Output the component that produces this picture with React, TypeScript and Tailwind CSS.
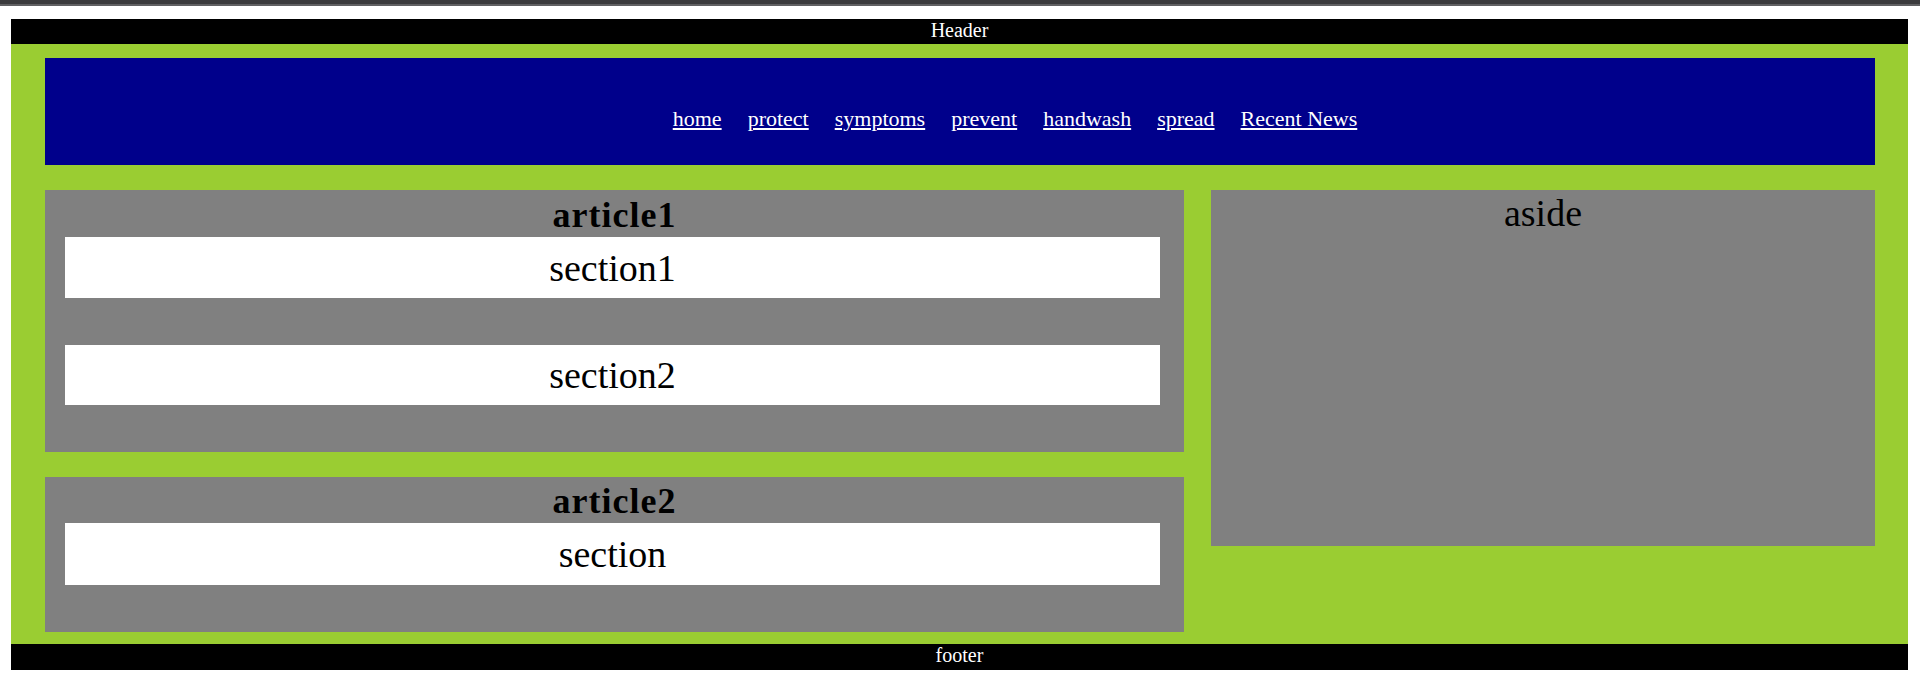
const links = ["home", "protect", "symptoms", "prevent", "handwash", "spread", "Recent News"];

const serif = "font-['Liberation_Serif','Times_New_Roman',serif]";

function Section({ label, className }: { label: string; className: string }) {
  return (
    <section
      className={`ml-[20px] mr-[24px] flex items-center justify-center bg-white text-[38px] leading-[44px] text-black ${serif} ${className}`}
    >
      {label}
    </section>
  );
}

function ArticleTitle({ children, className }: { children: React.ReactNode; className: string }) {
  return (
    <h2
      className={`text-center text-[36px] font-bold leading-[41px] tracking-[1px] text-black ${serif} ${className}`}
    >
      {children}
    </h2>
  );
}

export default function App() {
  return (
    <div className={`min-h-[688px] bg-white ${serif}`}>
      {/* window chrome strip */}
      <div className="h-[4px] bg-[#3b3b3d]" />
      <div className="h-[2px] bg-[#606062]" />

      <div className="ml-[11px] mr-[12px] mt-[13px]">
        <header className="h-[25px] bg-black text-center text-[20px] leading-[22px] text-white">
          Header
        </header>

        <div className="bg-[#9acd32] pb-[12px] pl-[34px] pr-[33px] pt-[14px]">
          <nav className="h-[107px] bg-[#00008b] pl-[110px] pt-[48px]">
            <ul className="flex justify-center gap-[26px] text-[22px] leading-[25px]">
              {links.map((l) => (
                <li key={l}>
                  <a href="#" className="text-white underline decoration-white">
                    {l}
                  </a>
                </li>
              ))}
            </ul>
          </nav>

          <div className="mt-[25px] flex items-start gap-[27px]">
            <div className="flex w-[1139px] flex-col gap-[25px]">
              <article className="h-[262px] bg-[#808080]">
                <ArticleTitle className="h-[47px] pt-[5px]">article1</ArticleTitle>
                <Section label="section1" className="h-[61px]" />
                <Section label="section2" className="mt-[47px] h-[60px]" />
              </article>

              <article className="h-[155px] bg-[#808080]">
                <ArticleTitle className="h-[46px] pt-[4px]">article2</ArticleTitle>
                <Section label="section" className="h-[62px]" />
              </article>
            </div>

            <aside
              className={`h-[356px] w-[664px] bg-[#808080] pt-[1px] text-center text-[38px] leading-[44px] text-black ${serif}`}
            >
              aside
            </aside>
          </div>
        </div>

        <footer className="h-[26px] bg-black text-center text-[20px] leading-[23px] text-white">
          footer
        </footer>
      </div>
    </div>
  );
}
